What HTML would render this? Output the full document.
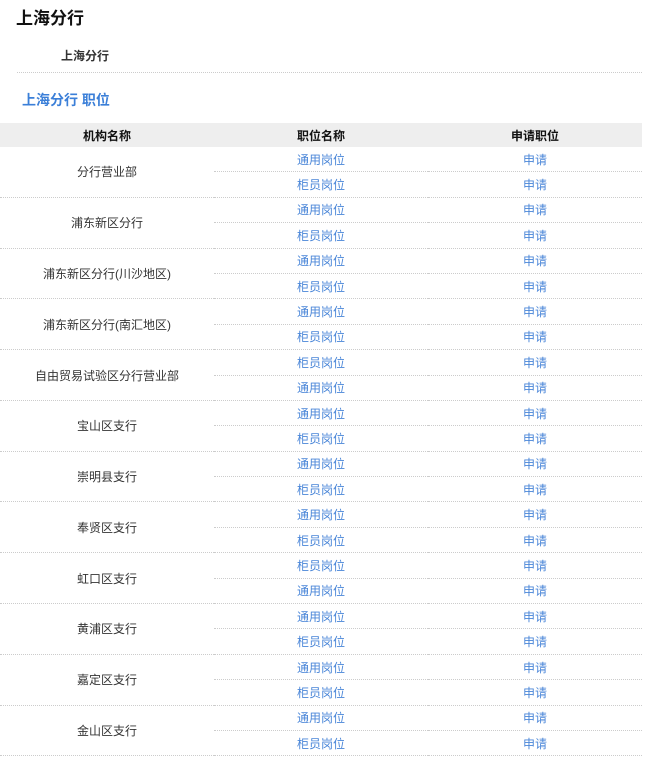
<!DOCTYPE html>
<html><head><meta charset="utf-8"><style>
body{margin:0;background:#fff;font-family:"Liberation Sans","Noto Sans CJK SC",sans-serif;color:#222;width:648px;height:758px;overflow:hidden;position:relative}
h1{position:absolute;left:16px;top:4px;margin:0;font-size:17px;font-weight:bold;color:#111}
.sub{position:absolute;left:61px;top:47px;font-size:12px;font-weight:bold;color:#333}
.line{position:absolute;left:17px;top:72px;width:625px;border-top:1px dotted #ccc}
.pos{position:absolute;left:22px;top:90px;font-size:14px;font-weight:bold;color:#3b7fd8}
table{position:absolute;left:0;top:123px;width:642px;border-collapse:collapse;font-size:12px}
th{background:#eeeeee;height:24px;padding:0;font-weight:bold;color:#111}
td{height:24.4px;padding:0;text-align:center;border-bottom:1px dotted #ccc}
td.o{color:#333}
td.b{color:#4a86d8}
</style></head><body>
<h1>上海分行</h1>
<div class="sub">上海分行</div>
<div class="line"></div>
<div class="pos">上海分行 职位</div>
<table>
<colgroup><col style="width:214px"><col style="width:214px"><col style="width:214px"></colgroup>
<tr><th>机构名称</th><th>职位名称</th><th>申请职位</th></tr>
<tr><td class="o" rowspan="2">分行营业部</td><td class="b">通用岗位</td><td class="b">申请</td></tr><tr><td class="b">柜员岗位</td><td class="b">申请</td></tr>
<tr><td class="o" rowspan="2">浦东新区分行</td><td class="b">通用岗位</td><td class="b">申请</td></tr><tr><td class="b">柜员岗位</td><td class="b">申请</td></tr>
<tr><td class="o" rowspan="2">浦东新区分行(川沙地区)</td><td class="b">通用岗位</td><td class="b">申请</td></tr><tr><td class="b">柜员岗位</td><td class="b">申请</td></tr>
<tr><td class="o" rowspan="2">浦东新区分行(南汇地区)</td><td class="b">通用岗位</td><td class="b">申请</td></tr><tr><td class="b">柜员岗位</td><td class="b">申请</td></tr>
<tr><td class="o" rowspan="2">自由贸易试验区分行营业部</td><td class="b">柜员岗位</td><td class="b">申请</td></tr><tr><td class="b">通用岗位</td><td class="b">申请</td></tr>
<tr><td class="o" rowspan="2">宝山区支行</td><td class="b">通用岗位</td><td class="b">申请</td></tr><tr><td class="b">柜员岗位</td><td class="b">申请</td></tr>
<tr><td class="o" rowspan="2">崇明县支行</td><td class="b">通用岗位</td><td class="b">申请</td></tr><tr><td class="b">柜员岗位</td><td class="b">申请</td></tr>
<tr><td class="o" rowspan="2">奉贤区支行</td><td class="b">通用岗位</td><td class="b">申请</td></tr><tr><td class="b">柜员岗位</td><td class="b">申请</td></tr>
<tr><td class="o" rowspan="2">虹口区支行</td><td class="b">柜员岗位</td><td class="b">申请</td></tr><tr><td class="b">通用岗位</td><td class="b">申请</td></tr>
<tr><td class="o" rowspan="2">黄浦区支行</td><td class="b">通用岗位</td><td class="b">申请</td></tr><tr><td class="b">柜员岗位</td><td class="b">申请</td></tr>
<tr><td class="o" rowspan="2">嘉定区支行</td><td class="b">通用岗位</td><td class="b">申请</td></tr><tr><td class="b">柜员岗位</td><td class="b">申请</td></tr>
<tr><td class="o" rowspan="2">金山区支行</td><td class="b">通用岗位</td><td class="b">申请</td></tr><tr><td class="b">柜员岗位</td><td class="b">申请</td></tr>
</table>
</body></html>
